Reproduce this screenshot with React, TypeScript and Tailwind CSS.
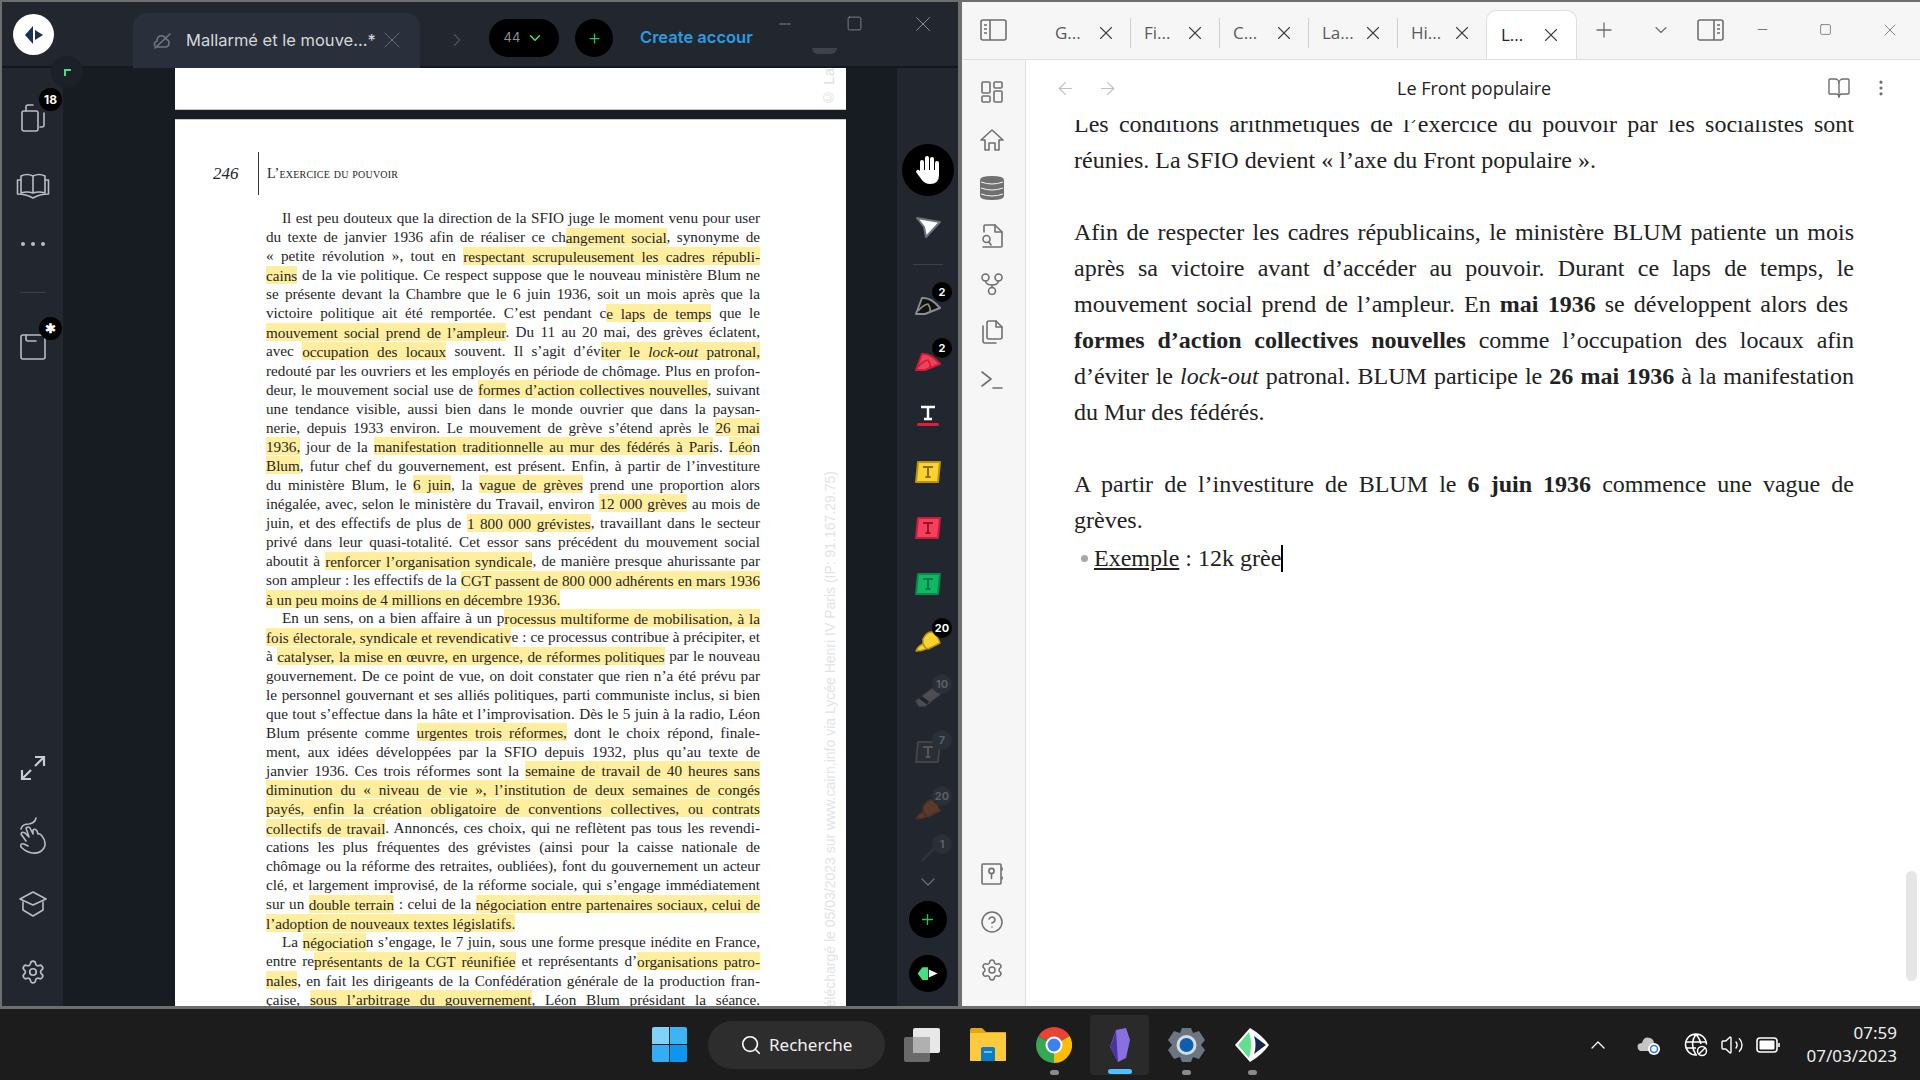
import React from 'react';
import { Settings, Search, ChevronUp, ChevronDown, ChevronRight, Plus, X, Minus, Square, ArrowLeft, ArrowRight, BookOpen, MoreVertical, HelpCircle, Volume2 } from 'lucide-react';

const pdfLines: { t: string; indent?: boolean; last?: boolean }[] = [
  { t: "Il est peu douteux que la direction de la SFIO juge le moment venu pour user", indent: true },
  { t: "du texte de janvier 1936 afin de réaliser ce ch[angement social], synonyme de" },
  { t: "« petite révolution », tout en [ respectant scrupuleusement les cadres républi-]" },
  { t: "[cains] de la vie politique. Ce respect suppose que le nouveau ministère Blum ne" },
  { t: "se présente devant la Chambre que le 6 juin 1936, soit un mois après que la" },
  { t: "victoire politique ait été remportée. C’est pendant c[e laps de temps] que le" },
  { t: "[mouvement social prend de l’ampleur]. Du 11 au 20 mai, des grèves éclatent," },
  { t: "avec [occupation des locaux] souvent. Il s’agit d’év[iter le _lock-out_ patronal,]" },
  { t: "redouté par les ouvriers et les employés en période de chômage. Plus en profon-" },
  { t: "deur, le mouvement social use de [formes d’action collectives nouvelles], suivant" },
  { t: "une tendance visible, aussi bien dans le monde ouvrier que dans la paysan-" },
  { t: "nerie, depuis 1933 environ. Le mouvement de grève s’étend après le [26 mai]" },
  { t: "[1936,] jour de la [manifestation traditionnelle au mur des fédérés à Pari]s. [Léo]n" },
  { t: "[Blum], futur chef du gouvernement, est présent. Enfin, à partir de l’investiture" },
  { t: "du ministère Blum, le [6 juin], la [vague de grèves] prend une proportion alors" },
  { t: "inégalée, avec, selon le ministère du Travail, environ [12 000 grèves] au mois de" },
  { t: "juin, et des effectifs de plus de [1 800 000 grévistes], travaillant dans le secteur" },
  { t: "privé dans leur quasi-totalité. Cet essor sans précédent du mouvement social" },
  { t: "aboutit à [renforcer l’organisation syndicale], de manière presque ahurissante par" },
  { t: "son ampleur : les effectifs de la [CGT passent de 800 000 adhérents en mars 1936]" },
  { t: "[à un peu moins de 4 millions en décembre 1936.]", last: true },
  { t: "En un sens, on a bien affaire à un p[rocessus multiforme de mobilisation, à la]", indent: true },
  { t: "[fois électorale, syndicale et revendicativ]e : ce processus contribue à précipiter, et" },
  { t: "à [catalyser, la mise en œuvre, en urgence, de réformes politiques] par le nouveau" },
  { t: "gouvernement. De ce point de vue, on doit constater que rien n’a été prévu par" },
  { t: "le personnel gouvernant et ses alliés politiques, parti communiste inclus, si bien" },
  { t: "que tout s’effectue dans la hâte et l’improvisation. Dès le 5 juin à la radio, Léon" },
  { t: "Blum présente comme [urgentes trois réformes,] dont le choix répond, finale-" },
  { t: "ment, aux idées développées par la SFIO depuis 1932, plus qu’au texte de" },
  { t: "janvier 1936. Ces trois réformes sont la [semaine de travail de 40 heures sans]" },
  { t: "[diminution du « niveau de vie », l’institution de deux semaines de congés]" },
  { t: "[payés, enfin la création obligatoire de conventions collectives, ou contrats]" },
  { t: "[collectifs de travail]. Annoncés, ces choix, qui ne reflètent pas tous les revendi-" },
  { t: "cations les plus fréquentes des grévistes (ainsi pour la caisse nationale de" },
  { t: "chômage ou la réforme des retraites, oubliées), font du gouvernement un acteur" },
  { t: "clé, et largement improvisé, de la réforme sociale, qui s’engage immédiatement" },
  { t: "sur un [double terrain] : celui de la [négociation entre partenaires sociaux, celui de]" },
  { t: "[l’adoption de nouveaux textes législatifs.]", last: true },
  { t: "La [négociatio]n s’engage, le 7 juin, sous une forme presque inédite en France,", indent: true },
  { t: "entre re[présentants de la CGT réunifiée] et représentants d’[organisations patro-]" },
  { t: "[nales], en fait les dirigeants de la Confédération générale de la production fran-" },
  { t: "çaise, [sous l’arbitrage du gouvernement], Léon Blum présidant la séance." },
];

// [..] = highlight, _.._ = italic
const renderItalic = (s: string) =>
  s.split('_').map((part, i) => (i % 2 ? <i key={i}>{part}</i> : <React.Fragment key={i}>{part}</React.Fragment>));

const renderLine = (s: string) =>
  s.split(/(\[[^\]]*\])/).map((part, i) =>
    part.startsWith('[') ? (
      <span key={i} className="bg-[#ffee9e] py-[0.5px]">{renderItalic(part.slice(1, -1))}</span>
    ) : (
      <React.Fragment key={i}>{part}</React.Fragment>
    ),
  );

const Badge = ({ children, faded, className }: { children: React.ReactNode; faded?: boolean; className: string }) => (
  <span
    className={`absolute flex items-center justify-center rounded-full font-['Inter',sans-serif] font-bold ${
      faded ? 'bg-[#2a2f38] text-[#5a5f68]' : 'bg-black text-white'
    } ${className}`}
  >
    {children}
  </span>
);

const Slot = ({ children, className = 'h-14' }: { children: React.ReactNode; className?: string }) => (
  <div className={`relative flex items-center justify-center ${className}`}>{children}</div>
);

const ToolBadge = ({ n, faded }: { n: string; faded?: boolean }) => (
  <Badge faded={faded} className="left-[35px] top-[6px] h-[20px] w-[20px] text-[11px]">{n}</Badge>
);

const ic = { fill: 'none', stroke: 'currentColor', strokeWidth: 1.6, strokeLinecap: 'round' as const, strokeLinejoin: 'round' as const };

const PenTool = ({ fill, stroke }: { fill: string; stroke: string }) => (
  <svg width="26" height="24" viewBox="0 0 26 24">
    <path d="M1 22 L7 6 Q16 5 25 16 L10 22 Z" fill={fill} stroke={stroke} strokeWidth="2" strokeLinejoin="round" />
    <path d="M3 19 Q8 13 13 12 Q16 16 15 20" fill="none" stroke={stroke} strokeWidth="1.5" />
  </svg>
);

const TextBox = ({ fill, stroke, text }: { fill: string; stroke: string; text: string }) => (
  <svg width="26" height="24" viewBox="0 0 26 24">
    <path d="M3 2 H25 L23 22 H1 Z" fill={fill} stroke={stroke} strokeWidth="2" strokeLinejoin="round" />
    <path d="M8 7 H18 M13 7 V17 M10.5 17 H15.5" fill="none" stroke={text} strokeWidth="2" />
  </svg>
);

const Marker = ({ fill, stroke }: { fill: string; stroke: string }) => (
  <svg width="26" height="24" viewBox="0 0 26 24">
    <path d="M8 11 Q12 3 17 4 Q23 8 25 15 L13 21 Q7 19 8 11 Z" fill={fill} stroke={stroke} strokeWidth="1.5" strokeLinejoin="round" />
    <path d="M1 23 Q3 18 8 16 L11 21 Q7 23 1 23 Z" fill={fill} stroke={stroke} strokeWidth="1.5" strokeLinejoin="round" />
  </svg>
);

const GemLogo = ({ size = 26 }: { size?: number }) => (
  <svg width={size} height={size * 0.8} viewBox="0 0 30 24">
    <path d="M2 12 L8 4 L15 4 L15 20 L8 20 Z" fill="#4ade80" />
    <path d="M16 7 L27 12 L16 17 Z" fill="#fff" />
  </svg>
);

const LeftSidebar = () => (
  <aside className="flex w-[61px] shrink-0 flex-col justify-between bg-[#21262f] text-[#b9bcc2]">
    <div className="flex flex-col pt-[16px]">
      <Slot className="h-[68px]">
        <svg width="26" height="28" viewBox="0 0 26 28" {...ic}>
          <rect x="2" y="7" width="16" height="20" rx="2" />
          <path d="M6 7 V3 Q6 1 8 1 H13" />
          <path d="M24 9 V21 Q24 23 22 23 H20" />
        </svg>
        <Badge className="left-[37px] top-[4px] h-[23px] w-[23px] text-[12px]">18</Badge>
      </Slot>
      <Slot className="h-[68px]">
        <svg width="34" height="26" viewBox="0 0 34 26" {...ic}>
          <path d="M5 3 Q11 0 17 3 Q23 0 29 3 V20 Q23 18 17 20 Q11 18 5 20 Z M17 3 V20" />
          <path d="M5 7 H1.5 V21 Q10 21 17 25 Q24 21 32.5 21 V7 H29" />
        </svg>
      </Slot>
      <Slot className="h-[48px]">
        <div className="flex gap-[6px]">
          <span className="h-[4px] w-[4px] rounded-full bg-[#b9bcc2]" />
          <span className="h-[4px] w-[4px] rounded-full bg-[#b9bcc2]" />
          <span className="h-[4px] w-[4px] rounded-full bg-[#b9bcc2]" />
        </div>
      </Slot>
      <div className="mx-auto mt-[24px] h-px w-[26px] bg-[#3a404a]" />
      <Slot className="mt-[20px] h-[68px]">
        <svg width="26" height="26" viewBox="0 0 26 26" {...ic}>
          <path d="M3 1 H20 Q25 1 25 6 V23 Q25 25 23 25 H3 Q1 25 1 23 V3 Q1 1 3 1 Z" />
          <path d="M6 1 V5 Q6 7 8 7 H16" />
        </svg>
        <Badge className="left-[37px] top-[4px] h-[23px] w-[23px] text-[13px]">✱</Badge>
      </Slot>
    </div>
    <div className="flex flex-col">
      <Slot className="h-[68px]">
        <svg width="26" height="26" viewBox="0 0 26 26" fill="none" stroke="#c9ccd1" strokeWidth="2.2">
          <path d="M2 24 L11 15 M15 11 L24 2 M15 2 H24 V11 M2 15 V24 H11" />
        </svg>
      </Slot>
      <Slot className="h-[68px]">
        <svg width="28" height="38" viewBox="0 0 28 38" {...ic}>
          <path d="M2 12 Q3 7 10 7 Q16 6 17 1" />
          <path d="M7 24 L2 17 Q3 14 6 16 L10 20 L7 11 Q9 9 11 11 L14 17 L14 13 Q16 11 18 14 L19 17 Q21 16 23 19 Q28 25 25 31 Q21 37 13 36 Q7 35 2 30 Q1 26 5 27 L9 29" />
        </svg>
      </Slot>
      <Slot className="h-[68px]">
        <svg width="28" height="26" viewBox="0 0 28 26" {...ic}>
          <path d="M14 1 L27 8 L14 14 L1 8 Z" />
          <path d="M4 11 V19 L14 25 L24 19 V11" />
        </svg>
      </Slot>
      <Slot className="h-[68px]">
        <Settings size={26} strokeWidth={1.6} />
      </Slot>
    </div>
  </aside>
);

const PdfArea = () => (
  <main className="flex min-w-0 flex-1 flex-col overflow-hidden bg-[#171b22] pl-[112px]">
    <div className="relative h-[42px] w-[671px] shrink-0 border-b border-[#c8c8c8] bg-white">
      <span className="absolute right-[6px] top-0 font-['Liberation_Sans',sans-serif] text-[15px] text-[#dedede] [writing-mode:vertical-rl] rotate-180">© La</span>
    </div>
    <div className="relative mt-[9px] w-[671px] flex-1 overflow-hidden border-t border-[#c8c8c8] bg-white font-['Liberation_Serif',serif] text-[#262626]">
      <div className="ml-[38px] mt-[32px] flex h-[43px] items-center">
        <span className="w-[45px] text-[17px] italic">246</span>
        <div className="h-full w-px bg-[#333]" />
        <span className="ml-[8px] text-[14.2px] [font-variant:small-caps] tracking-[0.2px]">L’exercice du pouvoir</span>
      </div>
      <div className="ml-[91px] mt-[13px] w-[494px] text-[15.2px] leading-[19.07px]">
        {pdfLines.map((line, i) => (
          <div
            key={i}
            className={`whitespace-nowrap ${line.last ? '' : '[text-align-last:justify]'} ${line.indent ? 'pl-[16px]' : ''}`}
          >
            {renderLine(line.t)}
          </div>
        ))}
      </div>
      <span className="absolute -bottom-[10px] right-[5px] font-['Liberation_Sans',sans-serif] text-[14px] text-[#e3e3e3] [writing-mode:vertical-rl] rotate-180">
        Téléchargé le 05/03/2023 sur www.cairn.info via Lycée Henri IV Paris (IP: 91.167.29.75)
      </span>
    </div>
  </main>
);

const RightToolbar = () => (
  <aside className="flex w-[61px] shrink-0 flex-col items-stretch bg-[#21262f] pt-[76px]">
    <div className="mx-auto flex h-[52px] w-[52px] items-center justify-center rounded-full bg-black">
      <svg width="28" height="30" viewBox="0 0 28 30" fill="#fff">
        <rect x="6" y="5" width="4" height="14" rx="2" />
        <rect x="11" y="1" width="4" height="17" rx="2" />
        <rect x="16" y="2" width="4" height="16" rx="2" />
        <rect x="21" y="6" width="4" height="13" rx="2" />
        <path d="M6 15 H25 V20 Q25 29 16 29 Q11 29 8 25 L2 17 Q3 13 6 16 Z" />
      </svg>
    </div>
    <Slot className="mt-[11px] h-[40px]">
      <svg width="26" height="24" viewBox="0 0 26 24">
        <path d="M2 3 L25 7 L11 22 L9 12 Z" fill="#fff" stroke="#6b7280" strokeWidth="2" strokeLinejoin="round" />
      </svg>
    </Slot>
    <div className="mx-auto mt-[17px] h-px w-[30px] bg-[#3a404a]" />
    <div className="mt-[11px] flex flex-col">
      <Slot><PenTool fill="#111" stroke="#8a8d92" /><ToolBadge n="2" /></Slot>
      <Slot><PenTool fill="#f4405a" stroke="#c81e3a" /><ToolBadge n="2" /></Slot>
      <Slot>
        <svg width="26" height="24" viewBox="0 0 26 24">
          <path d="M6 3 H20 M13 3 V15 M9 15 H17" fill="none" stroke="#fff" strokeWidth="2.4" />
          <rect x="2" y="19" width="22" height="3" rx="1.5" fill="#e11d38" />
        </svg>
      </Slot>
      <Slot><TextBox fill="#fbd22e" stroke="#b8930f" text="#8a6d0a" /></Slot>
      <Slot><TextBox fill="#f4405a" stroke="#c81e3a" text="#a01028" /></Slot>
      <Slot><TextBox fill="#10b866" stroke="#0a8a4b" text="#0a7a42" /></Slot>
      <Slot><Marker fill="#fbd22e" stroke="#b8930f" /><ToolBadge n="20" /></Slot>
      <Slot>
        <svg width="26" height="24" viewBox="0 0 26 24" className="opacity-50">
          <path d="M1 17 L17 5 L25 10 L10 22 H4 Z" fill="#777" stroke="#666" strokeWidth="1.5" />
          <path d="M5 13 L13 19" stroke="#222" strokeWidth="4" />
        </svg>
        <ToolBadge n="10" faded />
      </Slot>
      <Slot><TextBox fill="#2a2d33" stroke="#444" text="#555" /><ToolBadge n="7" faded /></Slot>
      <Slot><Marker fill="#5a3a2c" stroke="#4a3024" /><ToolBadge n="20" faded /></Slot>
    </div>
    <Slot className="mt-[8px] h-[20px]">
      <span className="h-[3px] w-[20px] -rotate-45 rounded bg-[#2e333c]" />
      <Badge faded className="left-[35px] top-[-10px] h-[20px] w-[20px] text-[11px]">1</Badge>
    </Slot>
    <Slot className="mt-[10px] h-4 text-[#6a6f78]"><ChevronDown size={24} strokeWidth={1.2} /></Slot>
    <div className="mx-auto mt-[11px] flex h-[37px] w-[38px] items-center justify-center rounded-full bg-black text-[#22c55e]">
      <Plus size={17} strokeWidth={1.8} />
    </div>
    <div className="mx-auto mt-[17px] flex h-[37px] w-[38px] items-center justify-center rounded-full bg-black">
      <GemLogo size={24} />
    </div>
  </aside>
);

const LeftWindow = () => (
  <section className="relative ml-[2px] flex w-[956px] shrink-0 flex-col">
    <header className="flex h-[66px] shrink-0 items-start border-b-2 border-[#14181e] bg-[#21262f] font-['Inter',sans-serif] text-[#c5c8cd]">
      <div className="ml-[11px] mt-[12px] flex h-[41px] w-[41px] items-center justify-center rounded-full bg-white">
        <svg width="22" height="22" viewBox="0 0 22 22">
          <path d="M10 2 L2 11 L10 20 Z" fill="#1e2f55" />
          <path d="M12 6 L20 11 L12 16 Z" fill="#1e2f55" />
        </svg>
      </div>
      <div className="ml-[79px] mt-[11px] flex h-[55px] w-[287px] items-center rounded-t-[14px] bg-[#2a303b] pb-[1px] pl-[19px]">
        <svg width="20" height="20" viewBox="0 0 20 20" className="mt-[2px] text-[#6f7680]" {...ic}>
          <path d="M3 17 L18 3" />
          <path d="M5 16 H13 Q17 16 17 12 Q17 9 14 8 Q12 4 8 5 Q5 6 5 10 Q1 12 3 15" />
        </svg>
        <span className="ml-[14px] w-[189px] whitespace-nowrap text-[16.5px] text-[#d5d7da]">Mallarmé et le mouve...*</span>
        <X size={28} strokeWidth={0.8} className="ml-[3px] text-[#6a707a]" />
      </div>
      <div className="ml-[26px] mt-[27px] text-[#4c525c]"><ChevronRight size={22} strokeWidth={1.4} /></div>
      <div className="ml-[21px] mt-[17px] flex h-[38px] w-[70px] items-center justify-center gap-[6px] rounded-full bg-black text-[13px] text-[#8b8f95]">
        44
        <ChevronDown size={18} className="text-[#4ade80]" strokeWidth={2} />
      </div>
      <div className="ml-[16px] mt-[17px] flex h-[38px] w-[38px] items-center justify-center rounded-full bg-black text-[#22c55e]">
        <Plus size={15} strokeWidth={2} />
      </div>
      <span className="ml-[27px] mt-[23px] w-[116px] whitespace-nowrap text-[16.5px] font-semibold text-[#2b9be0]">Create accour</span>
      <div className="relative flex-1 text-[#8a8e95]">
        <Minus size={18} strokeWidth={1.2} className="absolute left-[20px] top-[13px]" />
        <span className="absolute left-[56px] top-[46px] h-[6px] w-[25px] rounded-b-full bg-[#3d424c]" />
        <Square size={17} strokeWidth={1.2} className="absolute left-[90px] top-[13px]" />
        <X size={26} strokeWidth={0.9} className="absolute left-[154px] top-[9px]" />
      </div>
    </header>
    <div className="flex min-h-0 flex-1">
      <LeftSidebar />
      <PdfArea />
      <RightToolbar />
    </div>
    <div className="absolute left-[49px] top-[54px] flex h-[32px] w-[32px] items-center justify-center rounded-full bg-[#1c2028]">
      <span className="h-[7px] w-[7px] border-l-2 border-t-2 border-[#4ade80]" />
    </div>
  </section>
);

const tabs = ['G...', 'Fi...', 'C...', 'La...', 'Hi...'];

const ribbonTop = [
  <svg key="a" width="22" height="22" viewBox="0 0 22 22" {...ic}>
    <rect x="1" y="1" width="8" height="11" rx="1" /><rect x="13" y="1" width="8" height="6" rx="1" />
    <rect x="1" y="15" width="8" height="6" rx="1" /><rect x="13" y="10" width="8" height="11" rx="1" />
  </svg>,
  <svg key="b" width="24" height="22" viewBox="0 0 24 22" {...ic}>
    <path d="M12 1 L23 11 H19 V21 H15 V14 H9 V21 H5 V11 H1 Z" />
  </svg>,
  <svg key="c" width="26" height="26" viewBox="0 0 26 26">
    <path d="M1 5 Q1 1 13 1 Q25 1 25 5 V21 Q25 25 13 25 Q1 25 1 21 Z" fill="#707070" />
    <path d="M2 7 Q13 11 24 7 M2 13 Q13 17 24 13 M2 19 Q13 23 24 19" fill="none" stroke="#f6f6f6" strokeWidth="1" />
  </svg>,
  <svg key="d" width="22" height="24" viewBox="0 0 22 24" {...ic}>
    <path d="M3 8 V2 Q3 1 4 1 H14 L21 8 V22 Q21 23 20 23 H2" /><path d="M14 1 V8 H21" />
    <circle cx="5.5" cy="15" r="3.5" /><path d="M8 18 L10 21" />
  </svg>,
  <svg key="e" width="22" height="22" viewBox="0 0 22 22" {...ic}>
    <circle cx="4.5" cy="4.5" r="3.5" /><circle cx="17.5" cy="4.5" r="3.5" /><circle cx="11" cy="18" r="3.5" />
    <path d="M4.5 8 Q5 12 11 12 Q17 12 17.5 8 M11 12 V14.5" />
  </svg>,
  <svg key="f" width="22" height="24" viewBox="0 0 22 24" {...ic}>
    <path d="M6 3 Q6 1 8 1 H15 L21 7 V17 Q21 19 19 19 H8 Q6 19 6 17 Z" /><path d="M15 1 V7 H21" />
    <path d="M2 6 V21 Q2 23 4 23 H15" />
  </svg>,
  <svg key="g" width="22" height="18" viewBox="0 0 22 18" {...ic}>
    <path d="M1 1 L10 8 L1 15 M12 17 H21" />
  </svg>,
];

const PanelToggle = ({ right }: { right?: boolean }) => (
  <svg width="27" height="22" viewBox="0 0 27 22" fill="none" stroke="#6e6e6e" strokeWidth="1.6">
    <rect x="1" y="1" width="25" height="20" rx="2" />
    <path d={right ? 'M17 1 V21' : 'M10 1 V21'} />
    <path d={right ? 'M20 6 H23 M20 10 H23 M20 14 H23' : 'M4 6 H7 M4 10 H7 M4 14 H7'} />
  </svg>
);

const BodyLine = ({ children, plain }: { children: React.ReactNode; plain?: boolean }) => (
  <div className={`whitespace-nowrap ${plain ? '' : '[text-align-last:justify]'}`}>{children}</div>
);

const RightWindow = () => (
  <section className="ml-[4px] flex w-[958px] shrink-0 flex-col bg-white">
    <div className="flex h-[58px] shrink-0 items-end border-b border-[#dedede] bg-[#f6f6f6] font-['Open_Sans',sans-serif] text-[#4a4a4a]">
      <div className="flex h-full w-[79px] items-center pb-[2px] pl-[18px]"><PanelToggle /></div>
      {tabs.map((t, i) => (
        <div key={t} className={`mt-[16px] flex h-[30px] w-[89px] items-center self-start ${i > 0 ? 'border-l border-[#d0d0d0]' : ''}`}>
          <span className={`w-[40px] text-[17px] text-[#5a5a5a] ${i > 0 ? 'ml-[13px]' : 'ml-[14px]'}`}>{t}</span>
          <X size={22} strokeWidth={1.2} className="text-[#3f3f3f]" />
        </div>
      ))}
      <div className="flex h-[49px] w-[91px] items-center rounded-t-[10px] border border-b-0 border-[#dedede] bg-white">
        <span className="ml-[14px] w-[39px] text-[17px] text-[#222]">L...</span>
        <X size={22} strokeWidth={1.2} className="text-[#3f3f3f]" />
      </div>
      <div className="flex h-full flex-1 items-center pb-[2px] text-[#6e6e6e]">
        <Plus size={24} strokeWidth={1.3} className="ml-[15px]" />
        <ChevronDown size={20} strokeWidth={1.4} className="ml-[35px]" />
        <div className="ml-[26px]"><PanelToggle right /></div>
        <Minus size={15} strokeWidth={1.5} className="ml-[31px]" />
        <Square size={13} strokeWidth={1.5} className="ml-[49px]" />
        <X size={20} strokeWidth={1} className="ml-[48px]" />
      </div>
    </div>
    <div className="flex min-h-0 flex-1">
      <nav className="flex w-[64px] shrink-0 flex-col justify-between border-r border-[#e0e0e0] bg-[#f6f6f6] pb-[12px] pr-[3px] pt-[8px] text-[#707070]">
        <div className="flex flex-col">
          {ribbonTop.map((icon, i) => (
            <div key={i} className="flex h-[48px] items-center justify-center">{icon}</div>
          ))}
        </div>
        <div className="flex flex-col">
          <div className="flex h-[48px] items-center justify-center">
            <svg width="22" height="22" viewBox="0 0 22 22" {...ic}>
              <rect x="1" y="1" width="19" height="20" rx="1" />
              <circle cx="10.5" cy="8" r="2.6" />
              <path d="M10.5 10.6 V15.5 M21 5 V7 M21 14 V16" />
            </svg>
          </div>
          <div className="flex h-[48px] items-center justify-center"><HelpCircle size={24} strokeWidth={1.5} /></div>
          <div className="flex h-[48px] items-center justify-center"><Settings size={24} strokeWidth={1.5} /></div>
        </div>
      </nav>
      <div className="relative flex min-w-0 flex-1 flex-col">
        <div className="relative flex h-[60px] shrink-0 items-center pb-[4px] pl-[29px] text-[#c0c0c0]">
          <ArrowLeft size={21} strokeWidth={1.3} />
          <ArrowRight size={21} strokeWidth={1.3} className="ml-[21px]" />
          <span className="absolute left-[371px] top-[15px] font-['Open_Sans',sans-serif] text-[18px] text-[#222]">Le Front populaire</span>
          <BookOpen size={24} strokeWidth={1.4} className="ml-auto text-[#6e6e6e]" />
          <MoreVertical size={20} strokeWidth={1.8} className="ml-[20px] mr-[29px] text-[#6e6e6e]" />
        </div>
        <div className="min-h-0 flex-1 overflow-hidden">
          <div className="-mt-[14px] ml-[48px] w-[780px] font-['Liberation_Serif',serif] text-[24px] leading-[36px] text-[#222]">
            <BodyLine>Les conditions arithmétiques de l’exercice du pouvoir par les socialistes sont</BodyLine>
            <BodyLine plain>réunies. La SFIO devient « l’axe du Front populaire ».</BodyLine>
            <div className="h-[36px]" />
            <BodyLine>Afin de respecter les cadres républicains, le ministère BLUM patiente un mois</BodyLine>
            <BodyLine>après sa victoire avant d’accéder au pouvoir. Durant ce laps de temps, le</BodyLine>
            <BodyLine>mouvement social prend de l’ampleur. En <b>mai 1936</b> se développent alors des&nbsp;</BodyLine>
            <BodyLine><b>formes d’action collectives nouvelles</b> comme l’occupation des locaux afin</BodyLine>
            <BodyLine>d’éviter le <i>lock-out</i> patronal. BLUM participe le <b>26 mai 1936</b> à la manifestation</BodyLine>
            <BodyLine plain>du Mur des fédérés.</BodyLine>
            <div className="h-[36px]" />
            <BodyLine>A partir de l’investiture de BLUM le <b>6 juin 1936</b> commence une vague de</BodyLine>
            <BodyLine plain>grèves.</BodyLine>
            <div className="mt-[2px] flex items-center whitespace-nowrap pl-[7px]">
              <span className="h-[7px] w-[7px] rounded-full bg-[#a8a8a8]" />
              <span className="ml-[6px] underline">Exemple</span>
              <span>&nbsp;: 12k grèe</span>
              <span className="h-[27px] w-[2px] bg-black" />
            </div>
          </div>
        </div>
        <div className="absolute bottom-[25px] right-[3px] h-[110px] w-[11px] rounded-full bg-[#e6e6e6]" />
      </div>
    </div>
  </section>
);

const Taskbar = () => (
  <footer className="relative flex h-[71px] shrink-0 items-center bg-[#1c1c1c] font-['Noto_Sans',sans-serif] text-white">
    <div className="ml-[652px] grid h-[35px] w-[35px] grid-cols-2 gap-[1px]">
      <span className="rounded-tl-[2px] bg-[#7fd3fb]" />
      <span className="rounded-tr-[2px] bg-[#3cb4f5]" />
      <span className="rounded-bl-[2px] bg-[#33aef5]" />
      <span className="rounded-br-[2px] bg-[#0f95f0]" />
    </div>
    <div className="ml-[21px] flex h-[48px] w-[177px] items-center rounded-full bg-[#2d2d2d] pl-[32px]">
      <Search size={22} strokeWidth={1.8} />
      <span className="ml-[7px] text-[17px] text-[#f0f0f0]">Recherche</span>
    </div>
    <svg width="36" height="34" viewBox="0 0 36 34" className="ml-[19px]">
      <rect x="0" y="9" width="26" height="25" rx="2" fill="#6a6a6a" />
      <rect x="9" y="0" width="27" height="25" rx="2" fill="#e8e8e8" />
      <rect x="9" y="9" width="17" height="16" fill="#b0b0b0" />
    </svg>
    <svg width="36" height="33" viewBox="0 0 36 33" className="ml-[30px]">
      <path d="M0 2 Q0 0 2 0 H12 L16 4 H36 V33 H0 Z" fill="#e2a610" />
      <rect x="0" y="5" width="36" height="28" rx="1" fill="#fdc93d" />
      <path d="M11 33 V21 Q11 19 13 19 H23 Q25 19 25 21 V33 Z" fill="#0c7cc4" />
      <rect x="14" y="23" width="8" height="2" fill="#6cc0f0" />
    </svg>
    <svg width="36" height="36" viewBox="0 0 36 36" className="ml-[30px]">
      <path d="M18 18 L2.5 9 A18 18 0 0 1 33.6 9 Z" fill="#ea4335" />
      <path d="M18 18 L33.6 9 A18 18 0 0 1 18 36 Z" fill="#fbbc05" />
      <path d="M18 18 L18 36 A18 18 0 0 1 2.5 9 Z" fill="#34a853" />
      <circle cx="18" cy="18" r="8.5" fill="#fff" />
      <circle cx="18" cy="18" r="6.5" fill="#3b82f0" />
    </svg>
    <div className="ml-[18px] flex h-[60px] w-[59px] items-center justify-center rounded-[4px] bg-[#2a2a2a]">
      <svg width="22" height="34" viewBox="0 0 22 34">
        <path d="M7 2 L17 0 L21 12 L17 30 L9 34 L1 19 Z" fill="#8a6fe0" />
        <path d="M7 2 L4 12 L1 19 L9 34 Z" fill="#4a35a0" />
      </svg>
    </div>
    <svg width="37" height="34" viewBox="0 0 37 34" className="ml-[19px]">
      <path d="M14 0 H23 L25 5 L31 3 L37 12 L33 17 L37 22 L31 31 L25 29 L23 34 H14 L12 29 L6 31 L0 22 L4 17 L0 12 L6 3 L12 5 Z" fill="#6b7682" />
      <circle cx="18.5" cy="17" r="10" fill="#d8dce0" />
      <circle cx="18.5" cy="17" r="7" fill="#0f5fb0" />
    </svg>
    <svg width="36" height="36" viewBox="0 0 36 36" className="ml-[29px]">
      <path d="M1 18 L16 1 Q28 8 35 18 Q28 28 16 35 Z" fill="#fff" />
      <path d="M4 18 L15 5 Q19 18 15 31 Z" fill="#5fe08a" />
      <path d="M20 9 L32 18 L20 27 Q23 18 20 9 Z" fill="#16274f" />
    </svg>
    <span className="absolute left-[1050px] top-[61px] h-[5px] w-[9px] rounded-full bg-[#8a8a8a]" />
    <span className="absolute left-[1108px] top-[60px] h-[5px] w-[24px] rounded-full bg-[#4cc2ff]" />
    <span className="absolute left-[1182px] top-[61px] h-[5px] w-[9px] rounded-full bg-[#8a8a8a]" />
    <span className="absolute left-[1248px] top-[61px] h-[5px] w-[9px] rounded-full bg-[#8a8a8a]" />
    <div className="ml-auto flex items-center">
      <ChevronUp size={24} strokeWidth={1.3} />
      <svg width="25" height="20" viewBox="0 0 25 20" className="ml-[26px]">
        <path d="M2 14 Q0 8 6 8 Q8 1 14 3 Q18 4 18 9 L14 16 H4 Z" fill="#c4c4c4" />
        <circle cx="18" cy="14" r="6" fill="#fff" />
        <circle cx="18" cy="14" r="3.5" fill="none" stroke="#2a7fd6" strokeWidth="1.6" />
      </svg>
      <svg width="24" height="24" viewBox="0 0 24 24" fill="none" stroke="#fff" strokeWidth="1.5" className="ml-[23px]">
        <path d="M13 22 Q12 22 12 22 A10.5 10.5 0 1 1 22.5 11.5 M1.5 9 H22 M1.5 15 H12 M12 1 Q5 11 12 22 M12 1 Q16 6 17 11" />
        <circle cx="18" cy="18" r="4.5" />
        <path d="M15 21 L21 15" />
      </svg>
      <Volume2 size={24} strokeWidth={1.4} className="ml-[12px]" />
      <svg width="24" height="16" viewBox="0 0 24 16" fill="none" stroke="#fff" strokeWidth="1.6" className="ml-[12px]">
        <rect x="1" y="1" width="20" height="14" rx="3" />
        <rect x="3.5" y="3.5" width="15" height="9" rx="1" fill="#fff" stroke="none" />
        <path d="M23 6 V10" />
      </svg>
      <div className="-mt-[2px] ml-[27px] mr-[23px] flex flex-col items-end text-[17px] leading-[23px] text-[#eee]">
        <span>07:59</span>
        <span>07/03/2023</span>
      </div>
    </div>
  </footer>
);

export default function App() {
  return (
    <div className="flex h-screen w-full flex-col overflow-hidden bg-[#6e6e6e] pt-[2px]">
      <div className="flex min-h-0 flex-1 pb-[3px]">
        <LeftWindow />
        <RightWindow />
      </div>
      <Taskbar />
    </div>
  );
}
